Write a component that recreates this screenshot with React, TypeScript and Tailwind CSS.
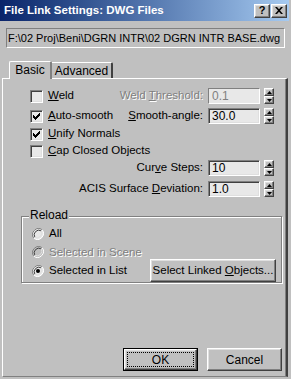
import React from 'react';

const raised =
    'border border-t-white border-l-white border-r-[#404040] border-b-[#404040] shadow-[inset_-1px_-1px_0_#808080,inset_1px_1px_0_#dfdfdf]';
const sunken =
    'border border-t-[#808080] border-l-[#808080] border-r-white border-b-white shadow-[inset_1px_1px_0_#404040,inset_-1px_-1px_0_#dfdfdf]';

const U = ({ children }: { children: React.ReactNode }) => <span className="underline underline-offset-[1px]">{children}</span>;

const Disabled = ({ children }: { children: React.ReactNode }) => (
    <span className="text-[#808080] [text-shadow:1px_1px_0_#ffffff]">{children}</span>
);

const CheckBox = ({ checked, label }: { checked?: boolean; label: React.ReactNode }) => (
    <div className="flex items-center">
        <div className={`w-[13px] h-[13px] bg-[#e8e8e8] flex items-center justify-center ${sunken}`}>
            {checked && (
                <svg width="7" height="7" viewBox="0 0 7 7">
                    <path d="M0 2h1v1h1v1h1v-1h1v-1h1v-1h1v-1h1v3h-1v1h-1v1h-1v1h-1v1h-1v-1h-1v-1h-1z" fill="#000" />
                </svg>
            )}
        </div>
        <span className="ml-[5px] leading-none text-[11.5px]">{label}</span>
    </div>
);

const Radio = ({ checked, disabled, label }: { checked?: boolean; disabled?: boolean; label: React.ReactNode }) => (
    <div className="flex items-center">
        <svg width="12" height="12" viewBox="0 0 12 12" className="ml-[1px]">
            <circle cx="6" cy="6" r="5.5" fill={disabled ? '#c0c0c0' : '#e8e8e8'} />
            <path d="M10.2 1.8 A6 6 0 0 0 1.8 10.2" stroke="#808080" strokeWidth="1" fill="none" />
            <path d="M1.8 10.2 A6 6 0 0 0 10.2 1.8" stroke="#ffffff" strokeWidth="1" fill="none" />
            <path d="M9.2 2.8 A4.7 4.7 0 0 0 2.8 9.2" stroke="#404040" strokeWidth="1" fill="none" />
            <path d="M2.8 9.2 A4.7 4.7 0 0 0 9.2 2.8" stroke="#dfdfdf" strokeWidth="1" fill="none" />
            {checked && <circle cx="6" cy="6" r="2" fill="#000" />}
        </svg>
        <span className="ml-[5px] leading-none text-[11.5px]">{disabled ? <Disabled>{label}</Disabled> : label}</span>
    </div>
);

const Arrow = ({ down }: { down?: boolean }) => (
    <svg width="5" height="3" viewBox="0 0 5 3">
        <path d={down ? 'M0 0h5L2.5 3z' : 'M0 3h5L2.5 0z'} fill="#000" />
    </svg>
);

const Spinner = () => (
    <div className="flex flex-col w-[10px] h-[16px] ml-[4px]">
        <div className={`flex-1 flex items-center justify-center bg-[#c0c0c0] ${raised}`}>
            <Arrow />
        </div>
        <div className={`flex-1 flex items-center justify-center bg-[#c0c0c0] ${raised}`}>
            <Arrow down />
        </div>
    </div>
);

function cx(...c: string[]) {
    return c.filter(Boolean).join(' ');
}

const Field = ({ label, value, disabled }: { label: React.ReactNode; value: string; disabled?: boolean }) => (
    <div className="flex items-center ml-auto">
        <span className="mr-[5px] leading-none text-[11.5px]">{disabled ? <Disabled>{label}</Disabled> : label}</span>
        <div
            className={cx(
                'w-[52px] h-[16px] bg-[#e8e8e8] flex items-center pl-[3px] text-[12px]',
                disabled
                    ? 'border border-t-[#808080] border-l-[#808080] border-r-white border-b-white text-[#808080]'
                    : sunken
            )}
        >
            {value}
        </div>
        <Spinner />
    </div>
);

const Button = ({ children, className = '' }: { children: React.ReactNode; className?: string }) => (
    <div className={`h-[23px] flex items-center justify-center bg-[#c0c0c0] ${raised} ${className}`}>{children}</div>
);

export default function App() {
    return (
        <div className="w-[291px] h-[379px] bg-[#c0c0c0] flex flex-col overflow-hidden font-['Liberation_Sans',sans-serif] text-[11px] text-black">
            {/* Title bar */}
            <div className="h-[21px] mr-[2px] flex items-center pl-[4px] pr-[2px] bg-gradient-to-r from-[#0a246a] to-[#a6caf0]">
                <span className="flex-1 font-bold text-white text-[11.5px]">File Link Settings: DWG Files</span>
                <div className={`w-[16px] h-[14px] flex items-center justify-center font-bold text-[11px] leading-none ${raised} bg-[#c0c0c0]`}>?</div>
                <div className={`w-[16px] h-[14px] ml-[1px] flex items-center justify-center ${raised} bg-[#c0c0c0]`}>
                    <svg width="8" height="7" viewBox="0 0 8 7">
                        <path d="M0 0h2l2 2.2L6 0h2L5 3.5 8 7H6L4 4.8 2 7H0l3-3.5z" fill="#000" />
                    </svg>
                </div>
            </div>

            {/* Path */}
            <div className="mt-[7px] mx-[6px] h-[20px] flex items-center pl-[1px] border border-t-[#808080] border-l-[#808080] border-r-white border-b-white text-[11px] whitespace-nowrap overflow-hidden">
                F:\02 Proj\Beni\DGRN INTR\02 DGRN INTR BASE.dwg
            </div>

            {/* Tabs */}
            <div className="mt-[12px] flex items-end h-[18px] pl-[9px] relative z-10">
                <div className="h-[18px] w-[43px] border-l border-t border-white border-r-2 border-r-[#808080] rounded-t-[2px] bg-[#c0c0c0] flex items-center justify-center text-[12px] -mb-[1px] pb-[1px]">
                    Basic
                </div>
                <div className="h-[16px] w-[61px] border-t border-white border-r-2 border-r-[#404040] rounded-tr-[2px] flex items-center justify-center text-[12px]">
                    Advanced
                </div>
            </div>

            {/* Panel */}
            <div className="flex-1 ml-[2px] mr-[3px] mb-[2px] border-l border-t border-white border-r-2 border-r-[#404040] border-b border-b-[#808080] shadow-[inset_-1px_0_0_#808080] flex flex-col pl-[27px] pr-[12px] pt-[9px]">
                <div className="flex items-center h-[16px]">
                    <CheckBox label={<><U>W</U>eld</>} />
                    <Field label={<>Weld <U>T</U>hreshold:</>} value="0.1" disabled />
                </div>
                <div className="flex items-center h-[16px] mt-[4px]">
                    <CheckBox checked label={<><U>A</U>uto-smooth</>} />
                    <Field label={<><U>S</U>mooth-angle:</>} value="30.0" />
                </div>
                <div className="flex items-center h-[16px] mt-[2px]">
                    <CheckBox checked label={<><U>U</U>nify Normals</>} />
                </div>
                <div className="flex items-center h-[16px] mt-[1px]">
                    <CheckBox label={<><U>C</U>ap Closed Objects</>} />
                </div>
                <div className="flex items-center h-[16px] mt-[1px]">
                    <Field label={<>Cur<U>v</U>e Steps:</>} value="10" />
                </div>
                <div className="flex items-center h-[16px] mt-[5px]">
                    <Field label={<>ACIS Surface <U>D</U>eviation:</>} value="1.0" />
                </div>

                {/* Reload group */}
                <div className="mt-[12px] -ml-[9px] -mr-[8px] relative pt-[7px]">
                    <span className="absolute left-[8px] top-0 px-[1px] bg-[#c0c0c0] text-[12px] leading-[13px]">Reload</span>
                    <div className="border border-[#808080] shadow-[inset_1px_1px_0_#ffffff,1px_1px_0_#ffffff] h-[67px] flex flex-col pl-[9px] pr-[5px] pt-[9px]">
                        <div className="h-[16px] flex items-center">
                            <Radio label="All" />
                        </div>
                        <div className="h-[16px] flex items-center mt-[3px]">
                            <Radio disabled label="Selected in Scene" />
                        </div>
                        <div className="h-[23px] flex items-center mt-[-1px]">
                            <Radio checked label="Selected in List" />
                            <Button className="ml-auto w-[126px] text-[11.5px]">
                                <span>Select Linked&nbsp;<U>O</U>bjects...</span>
                            </Button>
                        </div>
                    </div>
                </div>

                {/* Dialog buttons */}
                <div className="mt-auto mb-[5px] flex justify-end gap-[9px] -mr-[8px]">
                    <div className="w-[75px] h-[23px] border border-black">
                        <div className={`h-full flex items-center justify-center bg-[#c0c0c0] ${raised} relative`}>
                            <div className="absolute inset-[2px] border border-dotted border-black" />
                            <span className="text-[12px]">OK</span>
                        </div>
                    </div>
                    <Button className="w-[75px] text-[12px]">Cancel</Button>
                </div>
            </div>
        </div>
    );
}
